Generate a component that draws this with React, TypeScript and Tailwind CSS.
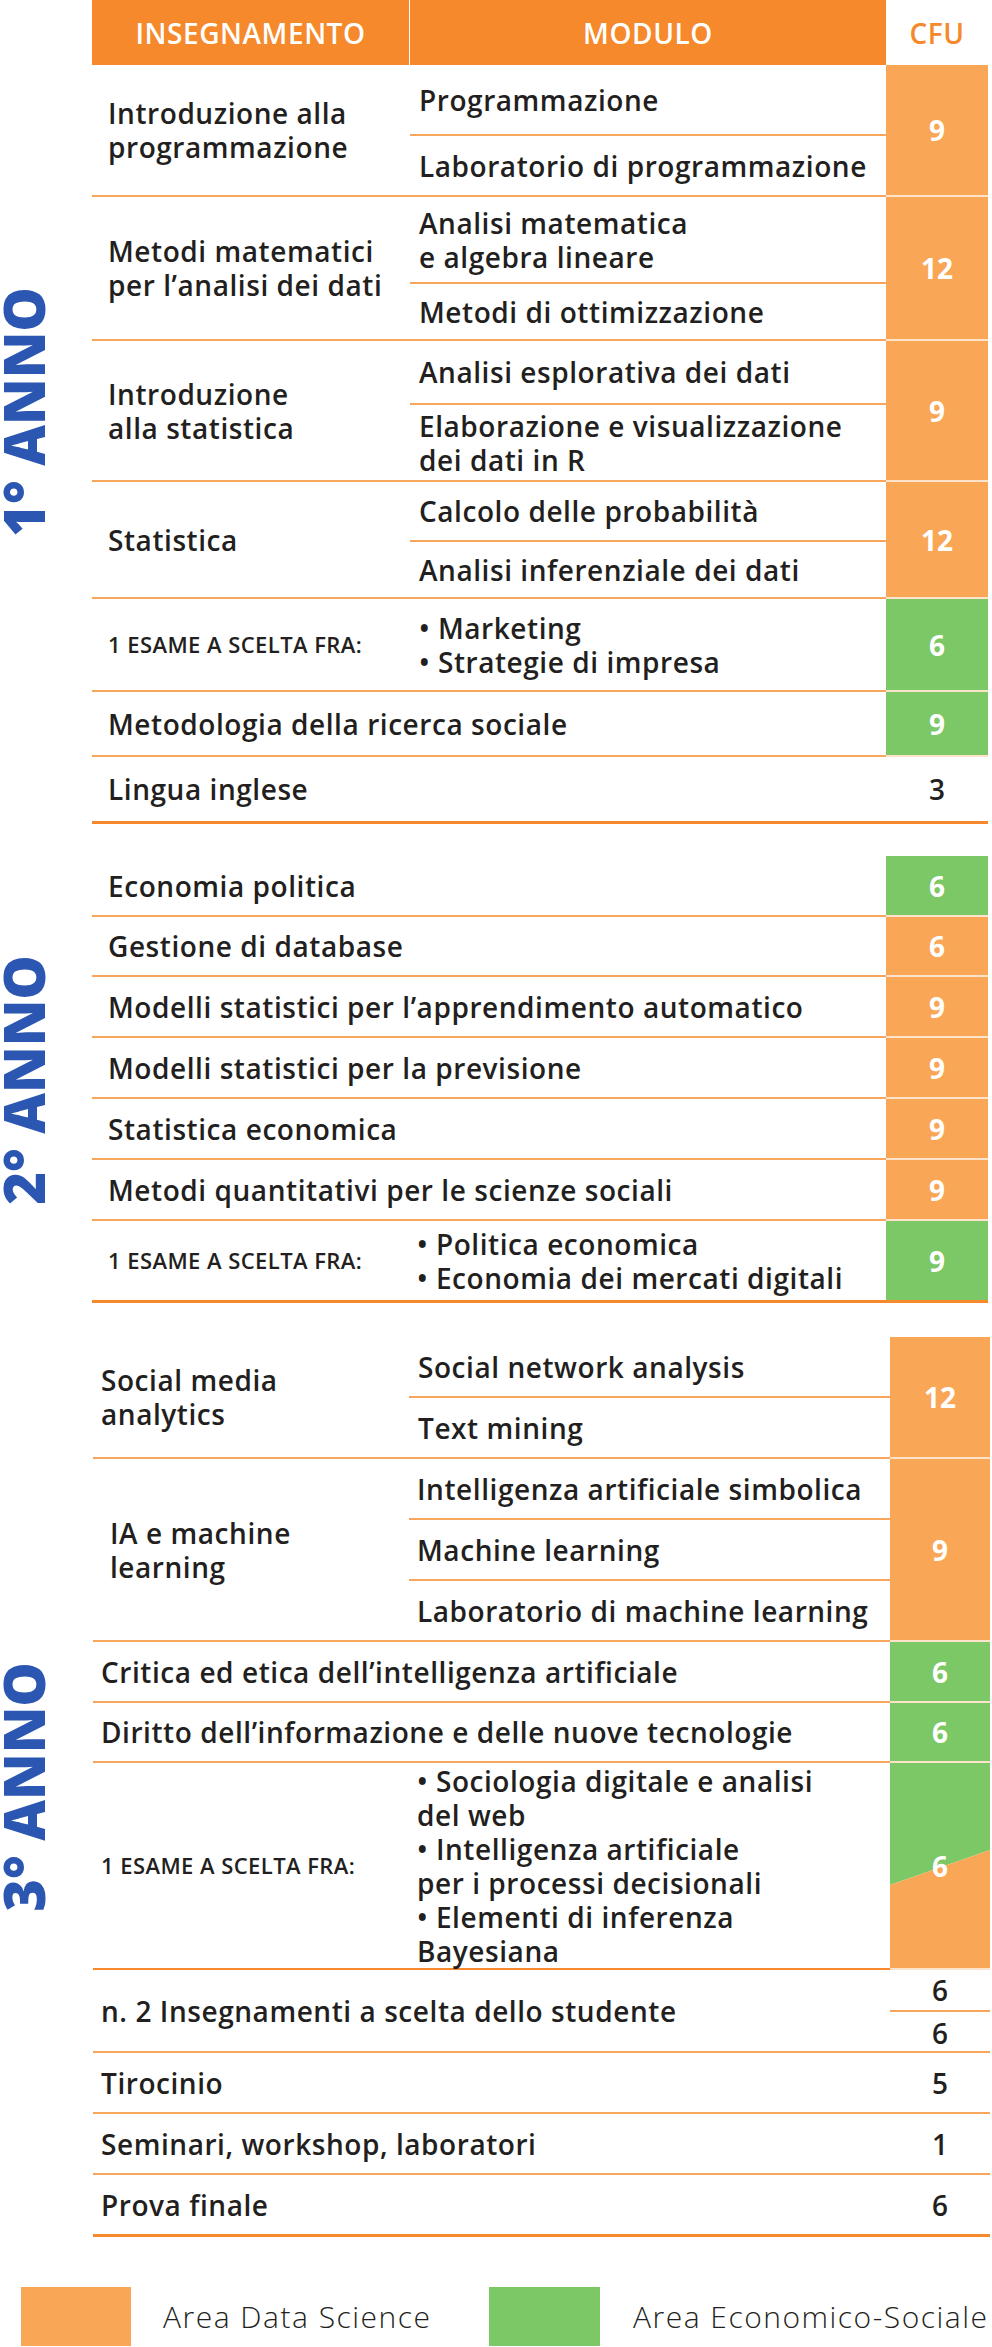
import React from "react";

const TXT = "font-semibold text-[28px] leading-[34px] tracking-[0.02em] text-[#231f20] whitespace-nowrap";
const SM = "font-semibold text-[22px] tracking-[0.02em] text-[#231f20] whitespace-nowrap";
const LN = "border-[#f8a55d]";

type Bg = "o" | "g" | "n";
type B = "thin" | "thick" | "dark";

function Line({
  h,
  cfu,
  bg,
  bottom = "thin",
  cfuW = "w-[102px]",
  cfuWeight = "font-semibold",
  children,
}: {
  h: string;
  cfu: React.ReactNode;
  bg: Bg;
  bottom?: B;
  cfuW?: string;
  cfuWeight?: string;
  children: React.ReactNode;
}) {
  const leftB =
    bottom === "thick"
      ? "border-b-[3px] border-[#f5892b]"
      : bottom === "dark"
      ? "border-b-2 border-[#f5892b]"
      : "border-b-2 border-[#f8a55d]";
  const cfuB = bottom === "thick" ? "border-b-[3px] border-[#f5892b]" : bg === "n" ? leftB : "border-b-2 border-[#fde3cb]";
  const c =
    bg === "o"
      ? "bg-[#f9a756] text-white font-bold"
      : bg === "g"
      ? "bg-[#7cc866] text-white font-bold"
      : `text-[#231f20] ${cfuWeight}`;
  return (
    <div className={`flex ${h}`}>
      <div className={`flex min-w-0 flex-1 ${leftB}`}>{children}</div>
      <div className={`flex shrink-0 items-center justify-center text-[28px] ${cfuW} ${c} ${cfuB}`}>{cfu}</div>
    </div>
  );
}

function YearLabel({ text, w }: { text: string; w: string }) {
  return (
    <div className={`flex ${w} shrink-0 items-center`}>
      <span className="rotate-180 whitespace-nowrap text-[56px] font-extrabold leading-[0.84] text-[#2b56b1] [writing-mode:vertical-rl]">
        {text}
      </span>
    </div>
  );
}

function Mods1({ first, h1, second }: { first: React.ReactNode; h1: string; second: React.ReactNode }) {
  return (
    <div className="flex flex-1 flex-col">
      <div className={`flex ${h1} items-center border-b-2 ${LN} pl-[9px] ${TXT}`}>
        <div>{first}</div>
      </div>
      <div className={`flex flex-1 items-center pl-[9px] ${TXT}`}>
        <div>{second}</div>
      </div>
    </div>
  );
}

export default function App() {
  return (
    <div className="w-[992px] bg-white pb-px font-['Open_Sans',sans-serif]">
      {/* YEAR 1 */}
      <div className="flex">
        <YearLabel text="1° ANNO" w="w-[92px]" />
        <div className="flex w-[896px] flex-col">
          <div className="flex h-[65px]">
            <div className="flex w-[794px] bg-[#f5892b]">
              <div className="flex w-[318px] items-center justify-center border-r border-white text-[28px] font-semibold tracking-[0.02em] text-white">
                INSEGNAMENTO
              </div>
              <div className="flex flex-1 items-center justify-center text-[28px] font-semibold tracking-[0.02em] text-white">
                MODULO
              </div>
            </div>
            <div className="flex w-[102px] items-center justify-center text-[28px] font-semibold tracking-[0.02em] text-[#f5892b]">
              CFU
            </div>
          </div>

          <Line h="h-[132px]" cfu="9" bg="o">
            <div className={`flex w-[318px] shrink-0 items-center pl-4 ${TXT}`}>
              <div>
                Introduzione alla
                <br />
                programmazione
              </div>
            </div>
            <Mods1 h1="h-[71px]" first="Programmazione" second="Laboratorio di programmazione" />
          </Line>

          <Line h="h-[144px]" cfu="12" bg="o">
            <div className={`flex w-[318px] shrink-0 items-center pl-4 ${TXT}`}>
              <div>
                Metodi matematici
                <br />
                per l’analisi dei dati
              </div>
            </div>
            <Mods1
              h1="h-[87px]"
              first={
                <>
                  Analisi matematica
                  <br />e algebra lineare
                </>
              }
              second="Metodi di ottimizzazione"
            />
          </Line>

          <Line h="h-[141px]" cfu="9" bg="o">
            <div className={`flex w-[318px] shrink-0 items-center pl-4 ${TXT}`}>
              <div>
                Introduzione
                <br />
                alla statistica
              </div>
            </div>
            <Mods1
              h1="h-[64px]"
              first="Analisi esplorativa dei dati"
              second={
                <>
                  Elaborazione e visualizzazione
                  <br />
                  dei dati in R
                </>
              }
            />
          </Line>

          <Line h="h-[117px]" cfu="12" bg="o">
            <div className={`flex w-[318px] shrink-0 items-center pl-4 ${TXT}`}>Statistica</div>
            <Mods1 h1="h-[60px]" first="Calcolo delle probabilità" second="Analisi inferenziale dei dati" />
          </Line>

          <Line h="h-[93px]" cfu="6" bg="g">
            <div className={`flex w-[318px] shrink-0 items-center pl-4 ${SM}`}>1 ESAME A SCELTA FRA:</div>
            <div className={`flex flex-1 items-center pl-[9px] ${TXT}`}>
              <div>
                • Marketing
                <br />• Strategie di impresa
              </div>
            </div>
          </Line>

          <Line h="h-[65px]" cfu="9" bg="g">
            <div className={`flex flex-1 items-center pl-4 ${TXT}`}>Metodologia della ricerca sociale</div>
          </Line>

          <Line h="h-[67px]" cfu="3" bg="n" bottom="thick">
            <div className={`flex flex-1 items-center pl-4 ${TXT}`}>Lingua inglese</div>
          </Line>
        </div>
      </div>

      {/* YEAR 2 */}
      <div className="mt-8 flex">
        <YearLabel text="2° ANNO" w="w-[92px]" />
        <div className="flex w-[896px] flex-col">
          <Line h="h-[61px]" cfu="6" bg="g">
            <div className={`flex flex-1 items-center pl-4 ${TXT}`}>Economia politica</div>
          </Line>
          <Line h="h-[60px]" cfu="6" bg="o">
            <div className={`flex flex-1 items-center pl-4 ${TXT}`}>Gestione di database</div>
          </Line>
          <Line h="h-[61px]" cfu="9" bg="o">
            <div className={`flex flex-1 items-center pl-4 ${TXT}`}>Modelli statistici per l’apprendimento automatico</div>
          </Line>
          <Line h="h-[61px]" cfu="9" bg="o">
            <div className={`flex flex-1 items-center pl-4 ${TXT}`}>Modelli statistici per la previsione</div>
          </Line>
          <Line h="h-[61px]" cfu="9" bg="o">
            <div className={`flex flex-1 items-center pl-4 ${TXT}`}>Statistica economica</div>
          </Line>
          <Line h="h-[61px]" cfu="9" bg="o">
            <div className={`flex flex-1 items-center pl-4 ${TXT}`}>Metodi quantitativi per le scienze sociali</div>
          </Line>
          <Line h="h-[82px]" cfu="9" bg="g" bottom="thick">
            <div className={`flex w-[318px] shrink-0 items-center pl-4 ${SM}`}>1 ESAME A SCELTA FRA:</div>
            <div className={`flex flex-1 items-center pl-[7px] ${TXT}`}>
              <div>
                • Politica economica
                <br />• Economia dei mercati digitali
              </div>
            </div>
          </Line>
        </div>
      </div>

      {/* YEAR 3 */}
      <div className="mt-[34px] flex">
        <YearLabel text="3° ANNO" w="w-[93px]" />
        <div className="flex w-[897px] flex-col">
          <Line h="h-[122px]" cfu="12" bg="o" cfuW="w-[100px]">
            <div className={`flex w-[316px] shrink-0 items-center pl-2 ${TXT}`}>
              <div>
                Social media
                <br />
                analytics
              </div>
            </div>
            <Mods1 h1="h-[61px]" first="Social network analysis" second="Text mining" />
          </Line>

          <Line h="h-[183px]" cfu="9" bg="o" cfuW="w-[100px]">
            <div className={`flex w-[316px] shrink-0 items-center pl-[17px] ${TXT}`}>
              <div>
                IA e machine
                <br />
                learning
              </div>
            </div>
            <div className="flex flex-1 flex-col">
              <div className={`flex h-[61px] items-center border-b-2 ${LN} pl-[8px] ${TXT}`}>
                Intelligenza artificiale simbolica
              </div>
              <div className={`flex h-[61px] items-center border-b-2 ${LN} pl-[8px] ${TXT}`}>Machine learning</div>
              <div className={`flex flex-1 items-center pl-[8px] ${TXT}`}>Laboratorio di machine learning</div>
            </div>
          </Line>

          <Line h="h-[61px]" cfu="6" bg="g" cfuW="w-[100px]">
            <div className={`flex flex-1 items-center pl-2 ${TXT}`}>Critica ed etica dell’intelligenza artificiale</div>
          </Line>

          <Line h="h-[60px]" cfu="6" bg="g" cfuW="w-[100px]">
            <div className={`flex flex-1 items-center pl-2 ${TXT}`}>Diritto dell’informazione e delle nuove tecnologie</div>
          </Line>

          <div className="flex h-[207px]">
            <div className="flex min-w-0 flex-1 border-b-2 border-[#f5892b]">
              <div className={`flex w-[316px] shrink-0 items-center pl-2 ${SM}`}>1 ESAME A SCELTA FRA:</div>
              <div className={`flex flex-1 items-center pl-[8px] ${TXT} leading-[33px]`}>
                <div>
                  • Sociologia digitale e analisi
                  <br />
                  del web
                  <br />• Intelligenza artificiale
                  <br />
                  per i processi decisionali
                  <br />• Elementi di inferenza
                  <br />
                  Bayesiana
                </div>
              </div>
            </div>
            <div className="relative flex w-[100px] shrink-0 items-center justify-center border-b-2 border-[#fde3cb]">
              <svg className="absolute inset-0 h-full w-full" viewBox="0 0 100 205" preserveAspectRatio="none">
                <polygon points="0,0 100,0 100,87 0,122" fill="#7cc866" />
                <polygon points="0,122 100,87 100,205 0,205" fill="#f9a756" />
              </svg>
              <span className="relative text-[28px] font-bold text-white">6</span>
            </div>
          </div>

          <div className="flex h-[83px] border-b-2 border-[#f8a55d]">
            <div className={`flex min-w-0 flex-1 items-center pl-2 ${TXT}`}>n. 2 Insegnamenti a scelta dello studente</div>
            <div className="flex w-[100px] shrink-0 flex-col text-[28px] font-semibold text-[#231f20]">
              <div className="flex h-[42px] items-center justify-center border-b-2 border-[#f8a55d]">6</div>
              <div className="flex flex-1 items-center justify-center">6</div>
            </div>
          </div>

          <Line h="h-[61px]" cfu="5" bg="n" cfuW="w-[100px]">
            <div className={`flex flex-1 items-center pl-2 ${TXT}`}>Tirocinio</div>
          </Line>
          <Line h="h-[61px]" cfu="1" bg="n" cfuW="w-[100px]">
            <div className={`flex flex-1 items-center pl-2 ${TXT}`}>Seminari, workshop, laboratori</div>
          </Line>
          <Line h="h-[62px]" cfu="6" bg="n" bottom="thick" cfuW="w-[100px]">
            <div className={`flex flex-1 items-center pl-2 ${TXT}`}>Prova finale</div>
          </Line>
        </div>
      </div>

      {/* LEGEND */}
      <div className="mt-[50px] flex h-[59px] items-center pl-[21px]">
        <div className="flex w-[468px] items-center gap-[32px]">
          <div className="h-[59px] w-[110px] bg-[#f9a756]" />
          <span className="text-[30px] font-light tracking-[0.05em] text-[#231f20]">Area Data Science</span>
        </div>
        <div className="flex items-center gap-[33px]">
          <div className="h-[59px] w-[111px] bg-[#7cc866]" />
          <span className="text-[30px] font-light tracking-[0.05em] text-[#231f20]">Area Economico-Sociale</span>
        </div>
      </div>
    </div>
  );
}
